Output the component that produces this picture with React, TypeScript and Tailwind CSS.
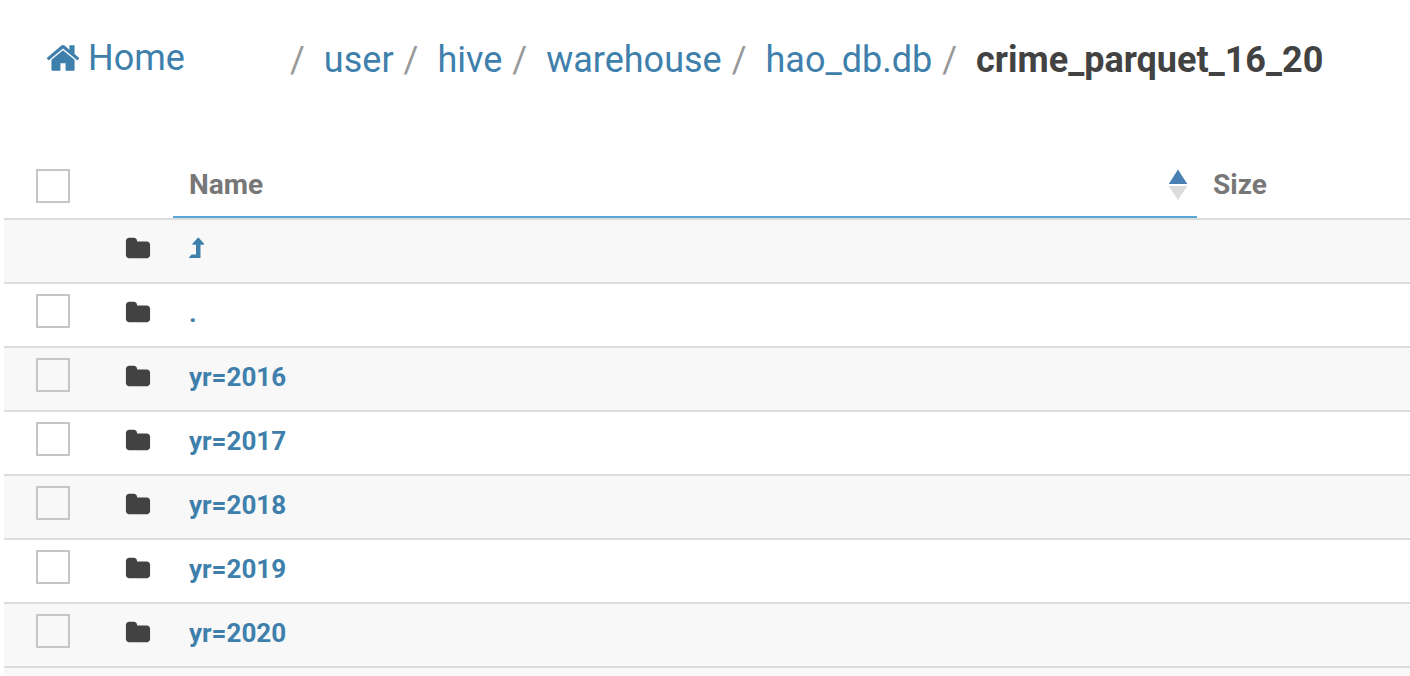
import React from "react";

const PARENTS = ["user", "hive", "warehouse", "hao_db.db"];

type Entry = { name: string; up?: boolean; selectable: boolean };

const ENTRIES: Entry[] = [
  { name: "Parent folder", up: true, selectable: false },
  { name: ".", selectable: true },
  { name: "yr=2016", selectable: true },
  { name: "yr=2017", selectable: true },
  { name: "yr=2018", selectable: true },
  { name: "yr=2019", selectable: true },
  { name: "yr=2020", selectable: true },
];

function HomeIcon() {
  return (
    <svg viewBox="0 0 1792 1792" className="h-9 w-9 shrink-0" fill="currentColor" aria-hidden="true">
      <path d="M1472 992v480q0 26-19 45t-45 19h-384v-384h-256v384h-384q-26 0-45-19t-19-45v-480q0-1 .5-3t.5-3l575-474 575 474q1 2 1 6zm223-69l-62 74q-8 9-21 11h-3q-13 0-21-7l-692-577-692 577q-12 8-24 7-13-2-21-11l-62-74q-8-10-7-23.5t11-21.5l719-599q32-26 76-26t76 26l244 204v-195q0-14 9-23t23-9h192q14 0 23 9t9 23v408l219 182q10 8 11 21.5t-7 23.5z" />
    </svg>
  );
}

function FolderIcon() {
  return (
    <svg viewBox="0 0 1792 1792" className="block h-[26px] w-[26px] text-[#424242]" fill="currentColor" aria-hidden="true">
      <path d="M1728 608v704q0 92-66 158t-158 66h-1216q-92 0-158-66t-66-158v-960q0-92 66-158t158-66h320q92 0 158 66t66 158v32h672q92 0 158 66t66 158z" />
    </svg>
  );
}

function LevelUpIcon() {
  return (
    <svg viewBox="0 0 16 22" className="block h-[22px] w-4" fill="currentColor" aria-hidden="true">
      <path d="M9.700 .8 14.900 6.600q.6 1.200-.6 1.200h-2.800v12.600q0 .6-.6 .6H.4Q-.3 20.900 .2 20.200L2.300 17.800q.2-.3 .6-.3H7V7.800H4.200q-1.200 0-.6-1.200L8.800 .8q.4-.4 .9 0z" />
    </svg>
  );
}

function SortIcon() {
  return (
    <svg viewBox="0 0 20 32" className="block h-8 w-5" aria-hidden="true">
      <path d="M10 .5 19.300 15H.7z" fill="#4a80b3" />
      <path d="M10 31 19.300 17H.7z" fill="#dcdcdc" />
    </svg>
  );
}

function Checkbox({ label }: { label: string }) {
  return (
    <input
      type="checkbox"
      aria-label={label}
      className="block h-[34px] w-[34px] appearance-none border-2 border-[#c6c6c6] bg-transparent checked:bg-[#3e7fac]"
    />
  );
}

export default function App() {
  return (
    <main className="font-[Roboto,sans-serif] text-[#424242]">
      <nav aria-label="Breadcrumb" className="flex items-start pt-9 pl-[45px] text-[36px] leading-[44px]">
        <a href="#home" className="flex w-[243px] shrink-0 items-center gap-[7px] text-[#3e7fac]">
          <HomeIcon />
          Home
        </a>
        <ol className="flex pt-0.5 whitespace-nowrap">
          {PARENTS.map((name) => (
            <li key={name} className="flex">
              <span className="pr-[19px] pl-0.5 text-[#999]">/</span>
              <a href={"#" + name} className="pr-2 text-[#3e7fac]">
                {name}
              </a>
            </li>
          ))}
          <li className="flex">
            <span className="pr-[19px] pl-0.5 text-[#999]">/</span>
            <span aria-current="page" className="font-bold">
              crime_parquet_16_20
            </span>
          </li>
        </ol>
      </nav>

      <div className="mt-[70px] pl-1">
        <table className="w-full table-fixed border-separate border-spacing-0 text-left">
          <colgroup>
            <col className="w-[105px]" />
            <col className="w-16" />
            <col />
            <col className="w-[213px]" />
          </colgroup>
          <thead>
            <tr className="h-[66px] text-[28px] leading-8 text-[#777]">
              <th className="pt-[17px] pl-8 align-top">
                <Checkbox label="Select all" />
              </th>
              <td />
              <th aria-sort="ascending" className="border-b-2 border-[#5ba5d8] pt-[17px] pr-[9px] pl-4 align-top font-bold">
                <div className="flex justify-between">
                  Name
                  <SortIcon />
                </div>
              </th>
              <th className="pt-[17px] pl-4 align-top font-bold">Size</th>
            </tr>
          </thead>
          <tbody className="text-[26px] leading-[30px] font-bold text-[#3e7fac]">
            {ENTRIES.map((entry) => (
              <tr key={entry.name} className="h-16 odd:bg-[#f8f8f8]">
                <td className="border-t-2 border-[#dcdcdc] pt-[10px] pl-8 align-top">
                  {entry.selectable && <Checkbox label={"Select " + entry.name} />}
                </td>
                <td className="border-t-2 border-[#dcdcdc] pt-4 pl-4 align-top">
                  <FolderIcon />
                </td>
                <td className="border-t-2 border-[#dcdcdc] pt-[14px] pl-4 align-top">
                  {entry.up ? (
                    <a href="#up" aria-label={entry.name} className="inline-block pt-[3px]">
                      <LevelUpIcon />
                    </a>
                  ) : (
                    <a href={"#" + entry.name}>{entry.name}</a>
                  )}
                </td>
                <td className="border-t-2 border-[#dcdcdc]" />
              </tr>
            ))}
          </tbody>
        </table>
        <div className="h-[10px] border-t-2 border-[#dcdcdc] bg-[#f8f8f8]" />
      </div>
    </main>
  );
}
